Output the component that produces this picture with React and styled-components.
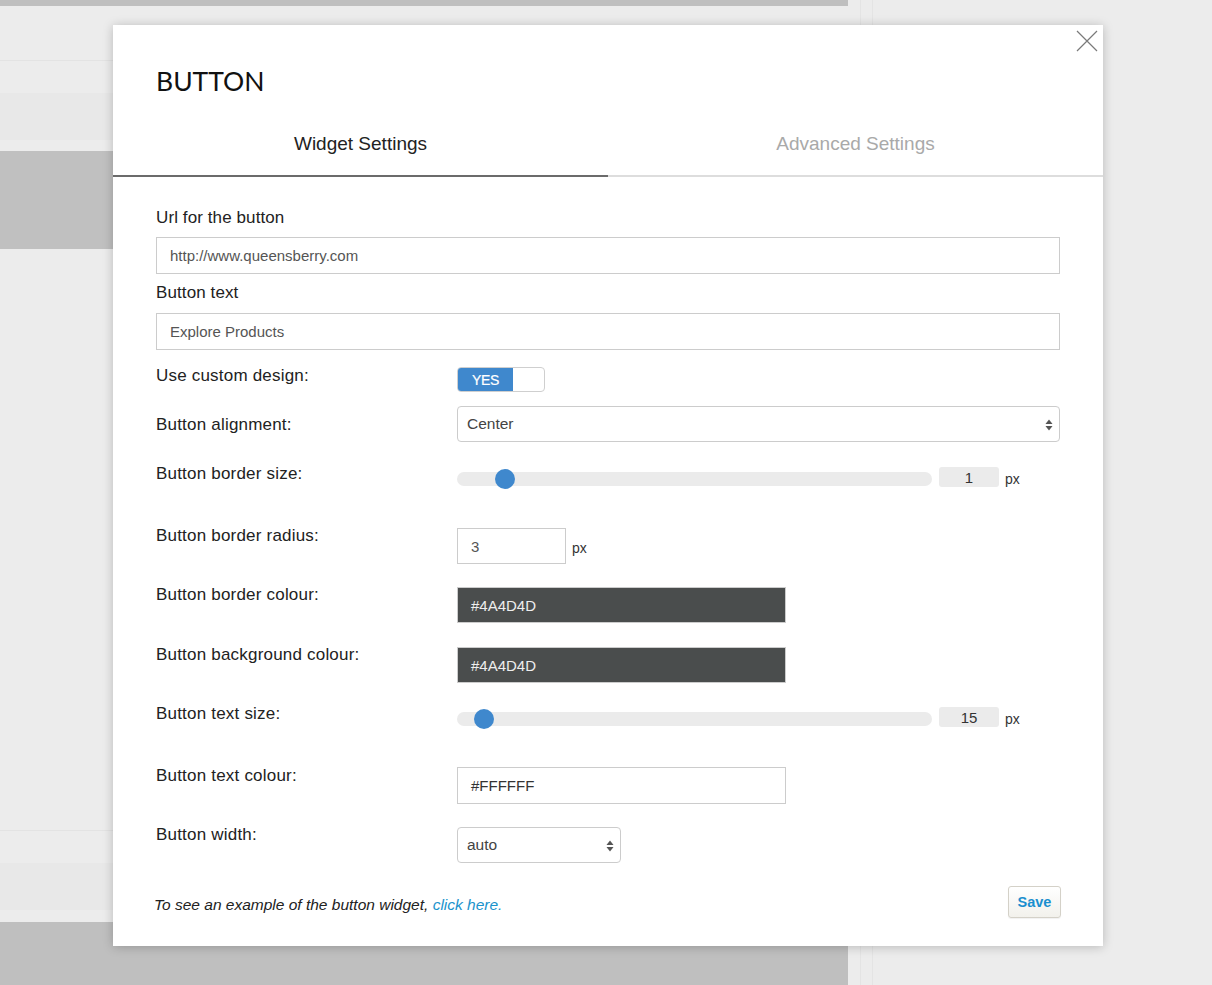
import React from "react";
import styled, { createGlobalStyle } from "styled-components";

const GlobalStyle = createGlobalStyle`
    html, body {
        margin: 0;
        padding: 0;
        background: #ececec;
        font-family: "Liberation Sans", Arial, sans-serif;
    }
    * {
        box-sizing: border-box;
    }
`

const Page = styled.div`
    position: relative;
    display: flex;
    width: 1212px;
    height: 985px;
    overflow: hidden;
`

const SideColumn = styled.div`
    display: flex;
    flex-direction: column;
    width: 848px;
`

const Strip = styled.div`
    height: ${props => props.h}px;
    flex: ${props => props.grow ? 1 : "none"};
    background: ${props => props.bg || "#ececec"};
    border-top: ${props => props.lineTop ? "1px solid #e3e3e3" : "none"};
`

const Gutter = styled.div`
    margin-left: 12px;
    width: 13px;
    border-left: 1px solid #e4e4e4;
    border-right: 1px solid #e4e4e4;
`

const Modal = styled.div`
    position: absolute;
    left: 113px;
    top: 25px;
    width: 990px;
    height: 921px;
    background: #fff;
    box-shadow: 0 1px 10px rgba(0, 0, 0, 0.22);
    display: flex;
    flex-direction: column;
`

const CloseButton = styled.div`
    position: absolute;
    top: 5px;
    right: 5px;
    width: 22px;
    height: 22px;
    cursor: pointer;
`

const Title = styled.h1`
    margin: 39px 0 0 43px;
    font-family: Lato, "Liberation Sans", sans-serif;
    font-weight: 400;
    font-size: 26.5px;
    line-height: 34px;
    color: #111;
`

const Tabs = styled.div`
    display: flex;
    margin-top: 11px;
`

const Tab = styled.div`
    flex: 1;
    height: 68px;
    padding-top: 4px;
    display: flex;
    align-items: center;
    justify-content: center;
    font-size: 19px;
    color: ${props => props.active ? "#222" : "#a9a9a9"};
    border-bottom: 2px solid ${props => props.active ? "#6b6b6b" : "#dddddd"};
    cursor: pointer;
`

const Body = styled.div`
    padding: 31px 43px 0 43px;
    display: flex;
    flex-direction: column;
`

const FieldLabel = styled.div`
    font-size: 17px;
    letter-spacing: 0.1px;
    line-height: 20px;
    color: #222;
    margin-bottom: ${props => props.mb || 9}px;
`

const TextInput = styled.div`
    width: ${props => props.w ? props.w + "px" : "100%"};
    height: ${props => props.h || 37}px;
    border: 1px solid #cccccc;
    background: ${props => props.bg || "#fff"};
    color: ${props => props.fg || "#555"};
    font-size: 15px;
    display: flex;
    align-items: center;
    padding-left: 13px;
    margin-bottom: ${props => props.mb || 0}px;
`

const Row = styled.div`
    display: flex;
    align-items: flex-start;
    height: ${props => props.h}px;
`

const RowLabel = styled.div`
    width: 301px;
    flex: none;
    font-size: 17px;
    letter-spacing: 0.2px;
    line-height: 20px;
    color: #222;
    margin-top: ${props => props.offset ?? -2}px;
`

const Control = styled.div`
    display: flex;
    align-items: center;
    flex: 1;
`

const Toggle = styled.div`
    display: flex;
    width: 88px;
    height: 25px;
    border: 1px solid #cfcfcf;
    border-radius: 4px;
    overflow: hidden;
`

const ToggleOn = styled.div`
    width: 55px;
    background: #3f88cd;
    color: #fff;
    font-size: 14px;
    letter-spacing: -0.4px;
    -webkit-text-stroke: 0.2px #fff;
    display: flex;
    align-items: center;
    justify-content: center;
`

const Select = styled.div`
    position: relative;
    width: ${props => props.w ? props.w + "px" : "100%"};
    height: 36px;
    border: 1px solid #cccccc;
    border-radius: 4px;
    display: flex;
    align-items: center;
    padding-left: 9px;
    font-size: 15.5px;
    color: #444;
`

const SelectArrows = styled.svg`
    position: absolute;
    right: 5px;
    top: 11px;
`

const Track = styled.div`
    position: relative;
    width: 475px;
    height: 14px;
    margin-top: 3px;
    border-radius: 7px;
    background: #ebebeb;
`

const Thumb = styled.div`
    position: absolute;
    top: -3px;
    width: 20px;
    height: 20px;
    margin-left: -10px;
    border-radius: 50%;
    background: #3f88cd;
`

const ValueBox = styled.div`
    width: 60px;
    height: 20px;
    margin-left: 7px;
    border-radius: 3px;
    background: #ebebeb;
    font-size: 15px;
    color: #333;
    display: flex;
    align-items: center;
    justify-content: center;
`

const Unit = styled.span`
    font-size: 14px;
    color: #333;
    margin-left: 6px;
    margin-top: ${props => props.mt || 0}px;
`

const Footer = styled.div`
    display: flex;
    justify-content: space-between;
    align-items: flex-end;
    margin-top: 23px;
`

const Note = styled.div`
    font-style: italic;
    font-size: 15.5px;
    line-height: 20px;
    color: #222;
    margin-left: -2px;
    margin-bottom: 3px;
`

const NoteLink = styled.a`
    color: #1b93cc;
    text-decoration: none;
`

const SaveButton = styled.button`
    width: 53px;
    height: 32px;
    border: 1px solid #d4d1c8;
    border-radius: 3px;
    background: linear-gradient(#ffffff, #f2f1ec);
    box-shadow: 0 1px 1px rgba(0, 0, 0, 0.06);
    color: #1a8fcf;
    font-family: "Liberation Sans", Arial, sans-serif;
    font-weight: 700;
    font-size: 14.5px;
    padding: 0;
    margin-right: -1px;
    cursor: pointer;
`

const Arrows = () => (
    <SelectArrows width="10" height="14" viewBox="0 0 10 14">
        <path d="M5 1.5 L8.5 6 L1.5 6 Z" fill="#555" />
        <path d="M5 12.5 L8.5 8 L1.5 8 Z" fill="#555" />
    </SelectArrows>
)

const Slider = ({ pos, value }) => (
    <Control>
        <Track>
            <Thumb style={{ left: pos }} />
        </Track>
        <ValueBox>{value}</ValueBox>
        <Unit mt={4}>px</Unit>
    </Control>
)

const App = () => {
    return (
        <>
            <GlobalStyle />
            <Page>
                <SideColumn>
                    <Strip h={6} bg="#bfbfbf" />
                    <Strip h={54} />
                    <Strip h={33} lineTop />
                    <Strip h={47} bg="#e8e8e8" />
                    <Strip h={11} />
                    <Strip h={98} bg="#c0c0c0" />
                    <Strip grow />
                    <Strip h={33} lineTop />
                    <Strip h={47} bg="#e8e8e8" />
                    <Strip h={12} />
                    <Strip h={63} bg="#bfbfbf" />
                </SideColumn>
                <Gutter />

                <Modal>
                    <CloseButton>
                        <svg width="22" height="22" viewBox="0 0 22 22">
                            <path d="M1 1 L21 21 M21 1 L1 21" stroke="#7a7a7a" strokeWidth="1.2" fill="none" />
                        </svg>
                    </CloseButton>
                    <Title>BUTTON</Title>
                    <Tabs>
                        <Tab active>Widget Settings</Tab>
                        <Tab>Advanced Settings</Tab>
                    </Tabs>

                    <Body>
                        <FieldLabel>Url for the button</FieldLabel>
                        <TextInput mb={9}>http://www.queensberry.com</TextInput>
                        <FieldLabel mb={10}>Button text</FieldLabel>
                        <TextInput mb={17}>Explore Products</TextInput>

                        <Row h={39}>
                            <RowLabel offset={-1}>Use custom design:</RowLabel>
                            <Control>
                                <Toggle>
                                    <ToggleOn>YES</ToggleOn>
                                </Toggle>
                            </Control>
                        </Row>
                        <Row h={61}>
                            <RowLabel offset={9}>Button alignment:</RowLabel>
                            <Control>
                                <Select>
                                    Center
                                    <Arrows />
                                </Select>
                            </Control>
                        </Row>
                        <Row h={61}>
                            <RowLabel offset={-3}>Button border size:</RowLabel>
                            <Slider pos={48} value="1" />
                        </Row>
                        <Row h={59}>
                            <RowLabel>Button border radius:</RowLabel>
                            <Control>
                                <TextInput w={109} h={36}>3</TextInput>
                                <Unit mt={4}>px</Unit>
                            </Control>
                        </Row>
                        <Row h={60}>
                            <RowLabel>Button border colour:</RowLabel>
                            <Control>
                                <TextInput w={329} h={36} bg="#4a4d4d" fg="#eeeeee">#4A4D4D</TextInput>
                            </Control>
                        </Row>
                        <Row h={60}>
                            <RowLabel>Button background colour:</RowLabel>
                            <Control>
                                <TextInput w={329} h={36} bg="#4a4d4d" fg="#eeeeee">#4A4D4D</TextInput>
                            </Control>
                        </Row>
                        <Row h={60}>
                            <RowLabel offset={-3}>Button text size:</RowLabel>
                            <Slider pos={27} value="15" />
                        </Row>
                        <Row h={60}>
                            <RowLabel offset={-1}>Button text colour:</RowLabel>
                            <Control>
                                <TextInput w={329} fg="#333">#FFFFFF</TextInput>
                            </Control>
                        </Row>
                        <Row h={36}>
                            <RowLabel>Button width:</RowLabel>
                            <Control>
                                <Select w={164}>
                                    auto
                                    <Arrows />
                                </Select>
                            </Control>
                        </Row>

                        <Footer>
                            <Note>
                                To see an example of the button widget, <NoteLink href="#">click here.</NoteLink>
                            </Note>
                            <SaveButton>Save</SaveButton>
                        </Footer>
                    </Body>
                </Modal>
            </Page>
        </>
    );
};

export default App;
